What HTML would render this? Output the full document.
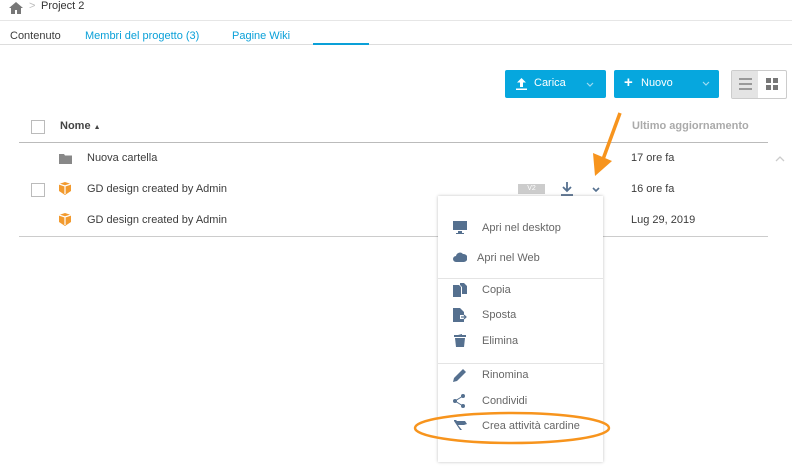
<!DOCTYPE html>
<html><head><style>
body{margin:0;width:792px;height:475px;background:#fff;font-family:"Liberation Sans",sans-serif;font-size:11px;color:#3c3c3c;position:relative;overflow:hidden}
.a{position:absolute;white-space:nowrap}
.blue{color:#0aa0d8}
.btn{position:absolute;background:#06a7de;border-radius:2px;color:#fff;height:28px;top:70px}
.cb{position:absolute;width:12px;height:12px;border:1px solid #bbb;background:#fff}
.mi{position:absolute;left:0;color:#666;font-size:11px}
.ic{fill:#55708f}
</style></head><body>
<svg class="a" style="left:9px;top:2px" width="14" height="12" viewBox="0 0 14 12"><path d="M7 0L0 6h2v6h4V8h2v4h4V6h2z" fill="#777"/></svg>
<div class="a" style="left:29px;top:0px;color:#bbb;font-size:11px">&gt;</div>
<div class="a" style="left:41px;top:0px;font-size:11px;color:#333">Project 2</div>
<div class="a" style="left:0;top:20px;width:792px;height:1px;background:#e6e6e6"></div>
<div class="a" style="left:10px;top:30px">Contenuto</div>
<div class="a blue" style="left:85px;top:30px">Membri del progetto (3)</div>
<div class="a blue" style="left:232px;top:30px">Pagine Wiki</div>
<div class="a" style="left:0;top:44px;width:792px;height:1px;background:#ddd"></div>
<div class="a" style="left:313px;top:43px;width:56px;height:2px;background:#0aa0d8"></div>

<div class="btn" style="left:505px;width:101px"><svg class="a" style="left:11px;top:8px" width="11" height="12"><path d="M5.5 0L1 4.5h3V9h3V4.5h3zM0 10.5h11v1.5H0z" fill="#fff"/></svg><span class="a" style="left:29px;top:7px">Carica</span><svg class="a" style="left:81px;top:12px" width="8" height="5"><path d="M1 1l3 3 3-3" stroke="#9fdcf2" stroke-width="1.2" fill="none"/></svg></div>
<div class="btn" style="left:614px;width:105px"><span class="a" style="left:10px;top:4px;font-size:15px;font-weight:bold">+</span><span class="a" style="left:27px;top:7px">Nuovo</span><svg class="a" style="left:88px;top:11px" width="8" height="5"><path d="M1 1l3 3 3-3" stroke="#9fdcf2" stroke-width="1.2" fill="none"/></svg></div>
<div class="a" style="left:731px;top:70px;width:54px;height:27px;border:1px solid #ccc;border-radius:2px;background:#fff"></div>
<div class="a" style="left:732px;top:71px;width:26px;height:27px;background:#e4e4e4"></div>
<svg class="a" style="left:739px;top:78px" width="13" height="12"><path d="M0 1h13M0 6h13M0 11h13" stroke="#999" stroke-width="2"/></svg>
<svg class="a" style="left:766px;top:78px" width="12" height="12"><path d="M0 0h5v5H0zM7 0h5v5H7zM0 7h5v5H0zM7 7h5v5H7z" fill="#777"/></svg>

<div class="cb" style="left:31px;top:120px"></div>
<div class="a" style="left:60px;top:120px;font-weight:bold;color:#444">Nome <span style="font-size:7px">&#9650;</span></div>
<div class="a" style="left:632px;top:120px;color:#aaa;font-weight:bold">Ultimo aggiornamento</div>
<div class="a" style="left:19px;top:142px;width:749px;height:1px;background:#bbb"></div>

<svg class="a" style="left:59px;top:154px" width="13" height="10"><path d="M0 0h5l1 1.5h7V10H0z" fill="#888"/></svg>
<div class="a" style="left:87px;top:152px">Nuova cartella</div>
<div class="a" style="left:631px;top:152px">17 ore fa</div>
<svg class="a" style="left:775px;top:156px" width="10" height="6"><path d="M1 5l4-4 4 4" stroke="#ccc" stroke-width="1.3" fill="none"/></svg>

<div class="cb" style="left:31px;top:183px"></div>
<svg class="a" style="left:59px;top:182px" width="12" height="13"><path d="M0 2L6 0l6 2v7l-6 4-6-4z" fill="#f29a2e"/><path d="M6 4v8M0 2l6 2 6-2" stroke="#fff" stroke-width="1.2" fill="none"/></svg>
<div class="a" style="left:87px;top:183px">GD design created by Admin</div>
<div class="a" style="left:518px;top:184px;width:27px;height:10px;background:#ccc;color:#fff;font-size:7px;text-align:center;line-height:10px">V2</div>
<svg class="a" style="left:561px;top:182px" width="12" height="14"><path d="M6 0v9M2 5l4 4 4-4M0 13h12" stroke="#55708f" stroke-width="1.8" fill="none"/></svg>
<svg class="a" style="left:592px;top:187px" width="8" height="5"><path d="M1 1l3 3 3-3" stroke="#55708f" stroke-width="1.6" fill="none"/></svg>
<div class="a" style="left:631px;top:183px">16 ore fa</div>

<svg class="a" style="left:59px;top:213px" width="12" height="13"><path d="M0 2L6 0l6 2v7l-6 4-6-4z" fill="#f29a2e"/><path d="M6 4v8M0 2l6 2 6-2" stroke="#fff" stroke-width="1.2" fill="none"/></svg>
<div class="a" style="left:87px;top:214px">GD design created by Admin</div>
<div class="a" style="left:631px;top:214px">Lug 29, 2019</div>
<div class="a" style="left:19px;top:236px;width:749px;height:1px;background:#ccc"></div>

<div class="a" style="left:438px;top:196px;width:165px;height:266px;background:#fff;box-shadow:0 0 3px rgba(0,0,0,.25)">
<svg class="a" style="left:15px;top:25px" width="14" height="13"><path d="M0 0h14v9H0z" class="ic"/><path d="M5 10h4v2h2v1H3v-1h2z" class="ic"/></svg>
<div class="mi" style="left:44px;top:26px">Apri nel desktop</div>
<svg class="a" style="left:15px;top:56px" width="14" height="10"><path d="M3 10a3 3 0 010-6 4 4 0 017-2 3.5 3.5 0 011 8z" class="ic"/></svg>
<div class="mi" style="left:39px;top:56px">Apri nel Web</div>
<div class="a" style="left:0;top:82px;width:165px;height:1px;background:#e4e4e4"></div>
<svg class="a" style="left:15px;top:87px" width="14" height="14"><path d="M0 2h6l2 2v10H0zM7 0h4l3 3v8H9V4L7 2z" class="ic"/></svg>
<div class="mi" style="left:44px;top:88px">Copia</div>
<svg class="a" style="left:15px;top:112px" width="14" height="14"><path d="M0 0h7l4 4v3H7v4h4v3H0z" class="ic"/><path d="M8 9h5M11 7l2 2-2 2" stroke="#55708f" stroke-width="1.2" fill="none"/></svg>
<div class="mi" style="left:44px;top:113px">Sposta</div>
<svg class="a" style="left:16px;top:138px" width="12" height="13"><path d="M0 1h12v2H0zM4 0h4v1zM1 4h10l-1 9H2z" class="ic"/></svg>
<div class="mi" style="left:44px;top:139px">Elimina</div>
<div class="a" style="left:0;top:167px;width:165px;height:1px;background:#e4e4e4"></div>
<svg class="a" style="left:15px;top:172px" width="14" height="14"><path d="M0 14l1-4 9-9 3 3-9 9z" class="ic"/></svg>
<div class="mi" style="left:44px;top:173px">Rinomina</div>
<svg class="a" style="left:15px;top:198px" width="12" height="14"><circle cx="10" cy="2" r="2" class="ic"/><circle cx="2" cy="7" r="2" class="ic"/><circle cx="10" cy="12" r="2" class="ic"/><path d="M10 2L2 7l8 5" stroke="#55708f" fill="none"/></svg>
<div class="mi" style="left:44px;top:199px">Condividi</div>
<svg class="a" style="left:16px;top:224px" width="13" height="10"><path d="M0 0l2 0 1 1h8l2 3-3 1H4l4 5H6L0 1z" class="ic"/></svg>
<div class="mi" style="left:44px;top:224px">Crea attività cardine</div>
</div>

<svg class="a" style="left:0;top:0" width="792" height="475">
<path d="M620 113L602 162" stroke="#f7941d" stroke-width="3.5" fill="none"/>
<path d="M593 153l2 23 17-15z" fill="#f7941d"/>
<ellipse cx="512" cy="428" rx="97" ry="15" stroke="#f7941d" stroke-width="2.5" fill="none"/>
</svg>
</body></html>
